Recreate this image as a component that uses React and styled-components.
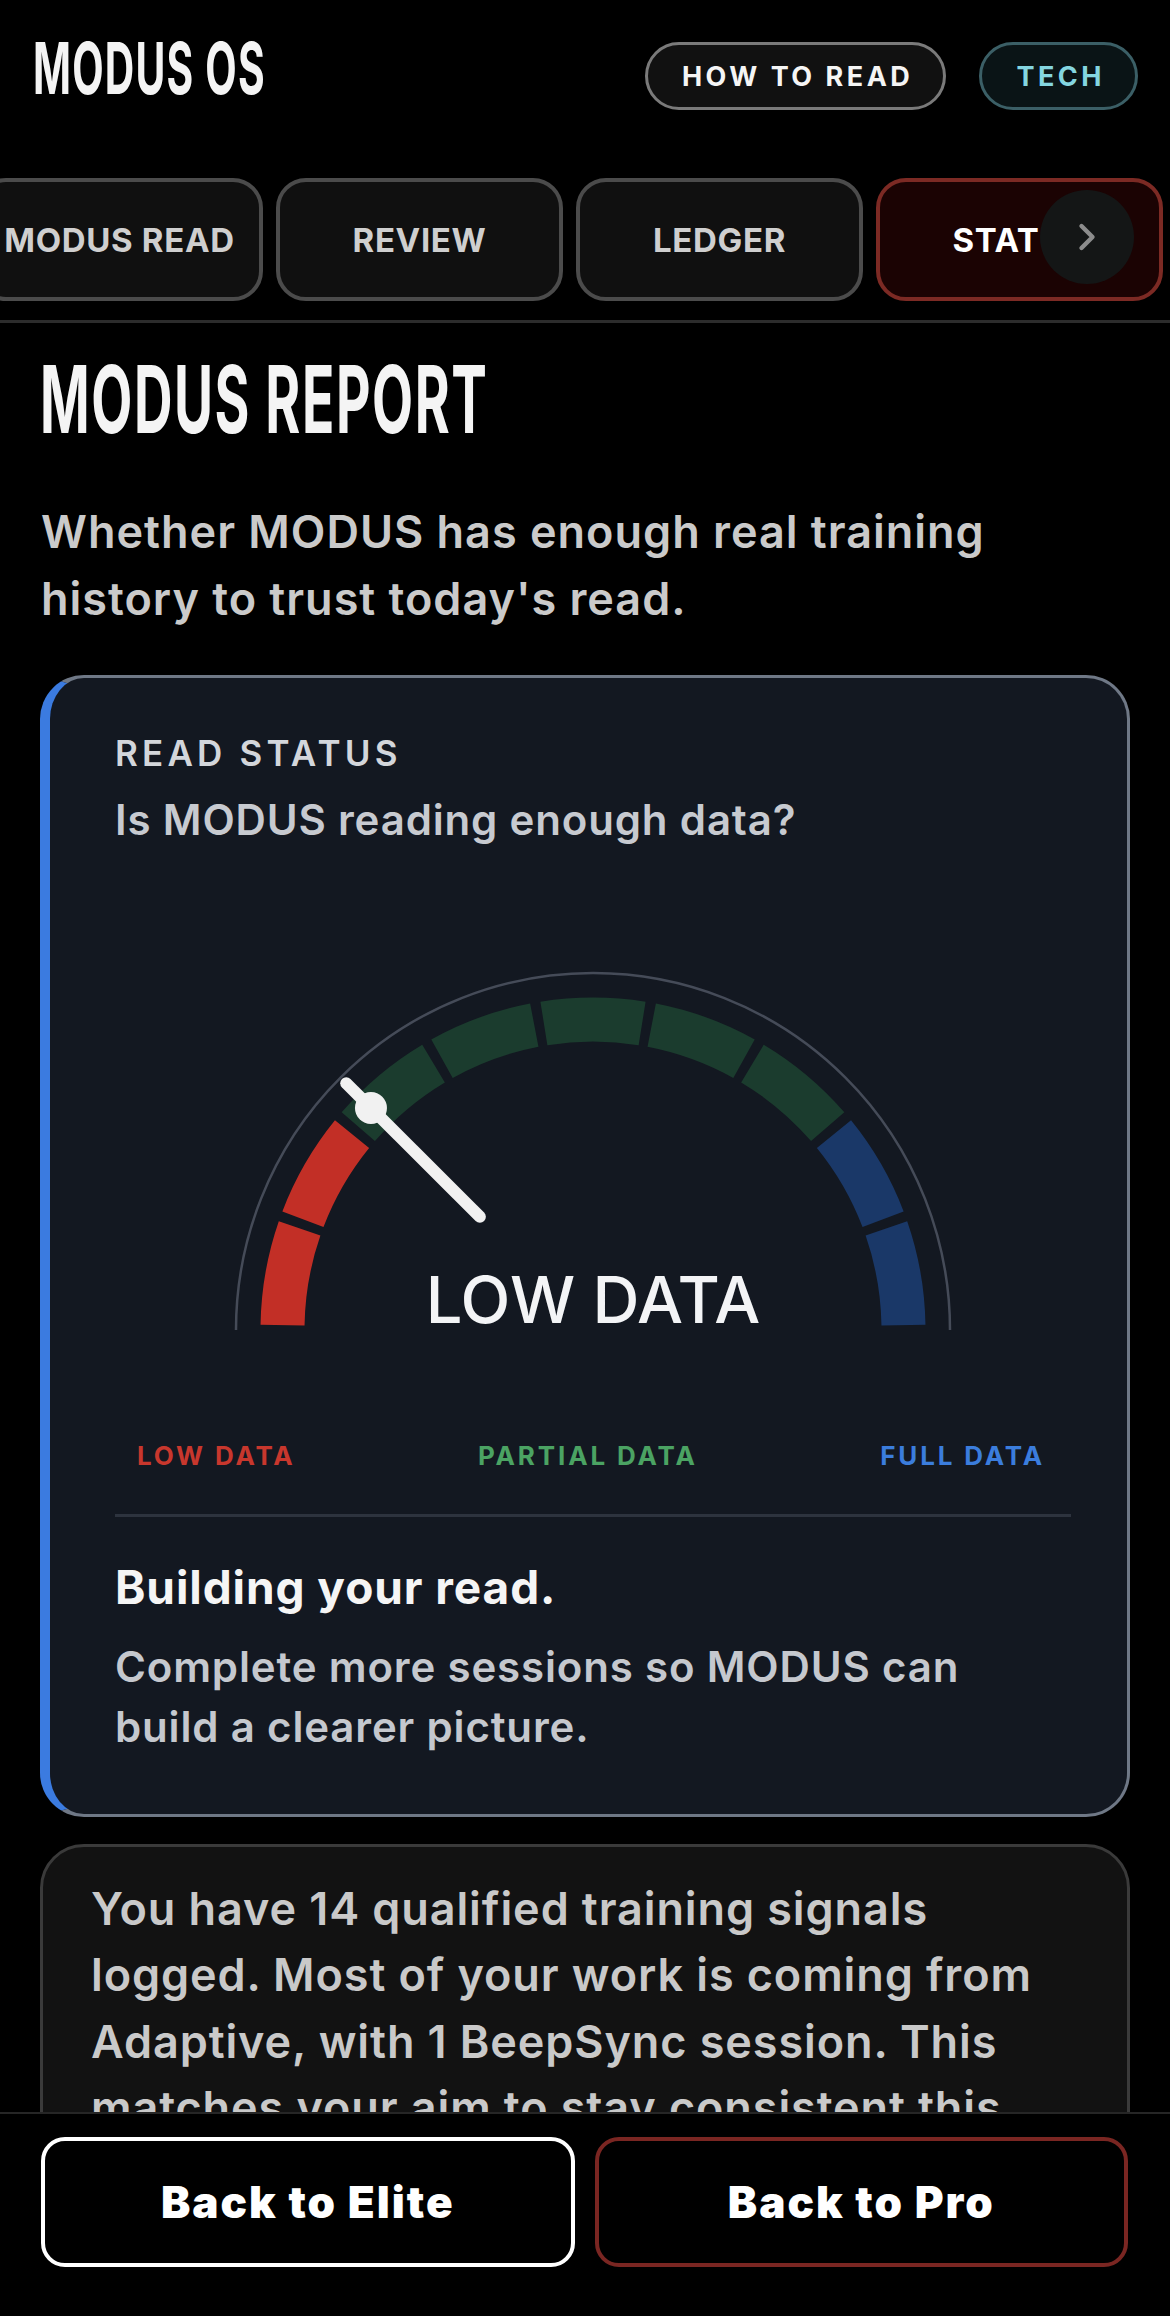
import React, { useLayoutEffect, useRef } from "react";
import styled, { createGlobalStyle } from "styled-components";
import { ChevronRight } from "lucide-react";

const Global = createGlobalStyle`
  html, body { margin: 0; padding: 0; background: #000; }
  body { font-family: Inter, "Noto Sans", sans-serif; color: #fff; }
  * { box-sizing: border-box; }
`;

const Page = styled.div`
  min-height: 100vh;
  background: #000;
  padding-bottom: 240px;
`;

const Header = styled.header`
  display: flex;
  justify-content: space-between;
  align-items: flex-start;
  padding: 33px 32px 0 33px;
`;

const Condensed = styled.span`
  display: inline-block;
  font-family: Inter, sans-serif;
  font-weight: 700;
  color: #f4f4f4;
  letter-spacing: 0.03em;
  transform: scaleX(0.57);
  transform-origin: left center;
  white-space: nowrap;
`;

const Logo = styled(Condensed)`
  font-size: 71.5px;
  line-height: 1;
`;

const Pills = styled.div`
  display: flex;
  gap: 33px;
  margin-top: 9px;
`;

const Pill = styled.button`
  height: 68px;
  padding: 0 30px 0 34px;
  border-radius: 34px;
  border: 3px solid ${(p) => (p.$tone === "tech" ? "#3b5f66" : "#7a7a7a")};
  background: ${(p) => (p.$tone === "tech" ? "#0a1416" : "#111")};
  color: ${(p) => (p.$tone === "tech" ? "#84d6e0" : "#f5f5f5")};
  font-family: Inter, sans-serif;
  font-weight: 700;
  font-size: 27px;
  letter-spacing: 0.13em;
  display: flex;
  align-items: center;
`;

const TabsWrap = styled.div`
  position: relative;
  margin-top: 68px;
`;

const TabScroller = styled.div`
  overflow-x: auto;
  scrollbar-width: none;
  &::-webkit-scrollbar { display: none; }
`;

const TabTrack = styled.div`
  display: flex;
  gap: 13px;
  padding-right: 12px;
  width: max-content;
`;

const Tab = styled.div`
  flex: 0 0 287px;
  height: 123px;
  border-radius: 30px;
  border: 4px solid ${(p) => (p.$active ? "#7c2a24" : "#4b4b4b")};
  background: ${(p) => (p.$active ? "#1b0303" : "#101010")};
  color: ${(p) => (p.$active ? "#ffffff" : "#cfcfcf")};
  display: flex;
  align-items: center;
  justify-content: center;
  font-weight: 700;
  font-size: 33px;
  letter-spacing: 0.02em;
  white-space: nowrap;
`;

const ScrollHint = styled.div`
  position: absolute;
  top: 12px;
  right: 36px;
  width: 94px;
  height: 94px;
  border-radius: 50%;
  background: #141616;
  display: flex;
  align-items: center;
  justify-content: center;
  color: #8c8c8c;
`;

const Divider = styled.div`
  height: 3px;
  background: #2c2c2c;
  margin-top: 19px;
`;

const Main = styled.main`
  padding: 0 40px;
`;

const Title = styled(Condensed)`
  font-size: 93.5px;
  line-height: 1;
  margin-top: 30px;
  display: block;
`;

const Lead = styled.p`
  margin: 51px 0 0 1px;
  font-weight: 600;
  font-size: 45px;
  line-height: 67px;
  letter-spacing: 0.022em;
  color: #cacaca;
`;

const StatusCard = styled.section`
  margin-top: 43px;
  border: 3px solid #6f7886;
  border-left: 10px solid #3b7be0;
  border-radius: 44px;
  background: #131821;
  padding: 54px 56px 57px 65px;
`;

const Eyebrow = styled.div`
  font-weight: 600;
  font-size: 35px;
  line-height: 42px;
  letter-spacing: 0.12em;
  color: #d3d6db;
`;

const Question = styled.div`
  margin-top: 21px;
  font-weight: 600;
  font-size: 42px;
  line-height: 50px;
  letter-spacing: 0.02em;
  color: #c7cad0;
`;

const GaugeSvg = styled.svg`
  display: block;
  margin-top: 95px;
  width: 956px;
  height: 400px;
`;

const Legend = styled.div`
  display: flex;
  justify-content: space-between;
  margin-top: 100px;
  padding: 0 26px 0 22px;
`;

const LegendLabel = styled.span`
  font-weight: 700;
  font-size: 26px;
  line-height: 32px;
  letter-spacing: 0.11em;
  color: ${(p) => p.$color};
`;

const Rule = styled.div`
  height: 3px;
  background: #2d333e;
  margin-top: 42px;
`;

const VerdictTitle = styled.div`
  margin-top: 43px;
  font-weight: 700;
  font-size: 46px;
  line-height: 54px;
  letter-spacing: 0.02em;
  color: #f5f5f5;
`;

const VerdictText = styled.div`
  margin-top: 23px;
  font-weight: 600;
  font-size: 42px;
  line-height: 60px;
  letter-spacing: 0.02em;
  color: #c5c8ce;
`;

const NoteCard = styled.section`
  margin-top: 27px;
  border: 3px solid #3a3a3a;
  border-radius: 44px;
  background: #121212;
  padding: 29px 44px 48px 48px;
`;

const NoteText = styled.p`
  margin: 0;
  font-weight: 600;
  font-size: 45px;
  line-height: 66.5px;
  letter-spacing: 0.02em;
  color: #c9c9c9;
`;

const BottomBar = styled.footer`
  position: fixed;
  left: 0;
  right: 0;
  bottom: 0;
  height: 204px;
  background: #000;
  border-top: 2px solid #262626;
  display: flex;
  gap: 20px;
  padding: 23px 42px 0 41px;
`;

const BackButton = styled.button`
  flex: 1;
  height: 130px;
  border-radius: 24px;
  border: 4px solid ${(p) => (p.$tone === "pro" ? "#7a2622" : "#ffffff")};
  background: #000;
  color: #fff;
  font-family: Inter, sans-serif;
  font-weight: 900;
  font-size: 44px;
  letter-spacing: 0.045em;
`;

const CX = 478;
const CY = 390;
const rad = (d) => (d * Math.PI) / 180;
const pt = (r, a) => [CX - r * Math.cos(rad(a)), CY - r * Math.sin(rad(a))];
const arc = (r, a1, a2) => {
  const [x1, y1] = pt(r, a1);
  const [x2, y2] = pt(r, a2);
  return `M ${x1} ${y1} A ${r} ${r} 0 0 1 ${x2} ${y2}`;
};

const SEG_COLORS = [
  "#c22f26",
  "#c22f26",
  "#1b3c2e",
  "#1b3c2e",
  "#1b3c2e",
  "#1b3c2e",
  "#1b3c2e",
  "#1a3868",
  "#1a3868",
];

function Gauge({ angle }) {
  const [nx1, ny1] = pt(160, angle);
  const [nx2, ny2] = pt(349, angle);
  const [kx, ky] = pt(314, angle);
  return (
    <GaugeSvg viewBox="0 0 956 400">
      <path d={arc(357, 0, 180)} fill="none" stroke="#454b58" strokeWidth="2.5" />
      {SEG_COLORS.map((c, i) => (
        <path
          key={i}
          d={arc(310.5, i * 20 + 0.9, (i + 1) * 20 - 0.9)}
          fill="none"
          stroke={c}
          strokeWidth="44"
        />
      ))}
      <line
        x1={nx1}
        y1={ny1}
        x2={nx2}
        y2={ny2}
        stroke="#f1f1f1"
        strokeWidth="12"
        strokeLinecap="round"
      />
      <circle cx={kx} cy={ky} r="16" fill="#f1f1f1" />
      <text
        x={CX}
        y="383"
        textAnchor="middle"
        fontFamily="Inter, 'Liberation Sans', sans-serif"
        fontWeight="500"
        fontSize="65"
        fill="#f3f4f6"
      >
        LOW DATA
      </text>
    </GaugeSvg>
  );
}

const TABS = ["MODUS READ", "REVIEW", "LEDGER", "STATUS"];

export default function App() {
  const scroller = useRef(null);
  useLayoutEffect(() => {
    if (scroller.current) scroller.current.scrollLeft = 24;
  }, []);

  return (
    <Page>
      <Global />
      <Header>
        <Logo>MODUS OS</Logo>
        <Pills>
          <Pill>HOW TO READ</Pill>
          <Pill $tone="tech">TECH</Pill>
        </Pills>
      </Header>

      <TabsWrap>
        <TabScroller ref={scroller}>
          <TabTrack>
            {TABS.map((t) => (
              <Tab key={t} $active={t === "STATUS"}>
                {t}
              </Tab>
            ))}
          </TabTrack>
        </TabScroller>
        <ScrollHint>
          <ChevronRight size={44} strokeWidth={2.4} />
        </ScrollHint>
      </TabsWrap>
      <Divider />

      <Main>
        <Title>MODUS REPORT</Title>
        <Lead>
          Whether MODUS has enough real training
          <br />
          history to trust today's read.
        </Lead>

        <StatusCard>
          <Eyebrow>READ STATUS</Eyebrow>
          <Question>Is MODUS reading enough data?</Question>
          <Gauge angle={45} />
          <Legend>
            <LegendLabel $color="#c8372d">LOW DATA</LegendLabel>
            <LegendLabel $color="#4ba363">PARTIAL DATA</LegendLabel>
            <LegendLabel $color="#3b7ddd">FULL DATA</LegendLabel>
          </Legend>
          <Rule />
          <VerdictTitle>Building your read.</VerdictTitle>
          <VerdictText>
            Complete more sessions so MODUS can
            <br />
            build a clearer picture.
          </VerdictText>
        </StatusCard>

        <NoteCard>
          <NoteText>
            You have 14 qualified training signals logged. Most of your work is
            coming from Adaptive, with 1 BeepSync session. This matches your aim
            to stay consistent this week.
          </NoteText>
        </NoteCard>
      </Main>

      <BottomBar>
        <BackButton>Back to Elite</BackButton>
        <BackButton $tone="pro">Back to Pro</BackButton>
      </BottomBar>
    </Page>
  );
}
